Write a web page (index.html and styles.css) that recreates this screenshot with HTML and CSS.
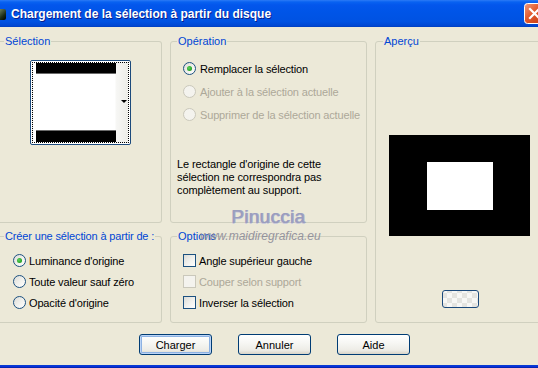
FILE: index.html
```html
<!DOCTYPE html>
<html lang="fr">
<head>
<meta charset="utf-8">
<title>Chargement de la sélection à partir du disque</title>
<link rel="stylesheet" href="styles.css">
</head>
<body>
<div class="window">
  <div class="titlebar">
    <span class="appicon"></span>
    <span class="title">Chargement de la sélection à partir du disque</span>
    <span class="close">
      <svg width="21" height="21" viewBox="0 0 21 21">
        <defs>
          <linearGradient id="cg" x1="0" y1="0" x2="1" y2="1">
            <stop offset="0" stop-color="#F19B7E"/>
            <stop offset="0.45" stop-color="#E2582C"/>
            <stop offset="1" stop-color="#C23A10"/>
          </linearGradient>
        </defs>
        <rect x="0.5" y="0.5" width="20" height="20" rx="3" fill="url(#cg)" stroke="#fff"/>
        <path d="M6 6 L15 15 M15 6 L6 15" stroke="#fff" stroke-width="2.2" stroke-linecap="square"/>
      </svg>
    </span>
  </div>
  <div class="content">
    <div class="groups">
      <fieldset class="group g-sel">
        <legend>Sélection</legend>
        <div class="thumb">
          <div class="thumb-focus">
            <div class="bar bar-top"></div>
            <div class="bar bar-bottom"></div>
            <span class="thumb-arrow"></span>
          </div>
        </div>
      </fieldset>
      <fieldset class="group g-op">
        <legend>Opération</legend>
        <div class="optlist op-list">
          <div class="opt"><span class="radio checked"></span>Remplacer la sélection</div>
          <div class="opt disabled"><span class="radio"></span>Ajouter à la sélection actuelle</div>
          <div class="opt disabled"><span class="radio"></span>Supprimer de la sélection actuelle</div>
        </div>
        <p class="note">Le rectangle d'origine de cette<br>sélection ne correspondra pas<br>complètement au support.</p>
      </fieldset>
      <fieldset class="group g-prev">
        <legend>Aperçu</legend>
        <div class="preview"><div class="preview-inner"></div></div>
        <div class="zoombtn"></div>
      </fieldset>
      <fieldset class="group g-create">
        <legend>Créer une sélection à partir de :</legend>
        <div class="optlist create-list">
          <div class="opt small"><span class="radio checked"></span>Luminance d'origine</div>
          <div class="opt small"><span class="radio"></span>Toute valeur sauf zéro</div>
          <div class="opt small"><span class="radio"></span>Opacité d'origine</div>
        </div>
      </fieldset>
      <fieldset class="group g-options">
        <legend>Options</legend>
        <div class="optlist options-list">
          <div class="opt small"><span class="check"></span>Angle supérieur gauche</div>
          <div class="opt small disabled"><span class="check"></span>Couper selon support</div>
          <div class="opt small"><span class="check"></span>Inverser la sélection</div>
        </div>
      </fieldset>
    </div>
    <div class="buttons">
      <button class="btn default">Charger</button>
      <button class="btn">Annuler</button>
      <button class="btn">Aide</button>
    </div>
  </div>
  <div class="bottomedge"></div>
  <span class="wm-name">Pinuccia</span>
  <span class="wm-url">www.maidiregrafica.eu</span>
</div>
</body>
</html>
```

FILE: styles.css
```css
html, body {
  margin: 0;
  padding: 0;
  overflow: hidden;
  background: #ECE9D8;
}

.window {
  position: relative;
  width: 560px;
  height: 368px;
  display: flex;
  flex-direction: column;
  background: #ECE9D8;
  font-family: "Liberation Sans", Arial, sans-serif;
  font-size: 11px;
  color: #000;
}

.titlebar {
  height: 27px;
  flex: none;
  display: flex;
  align-items: center;
  background: linear-gradient(to bottom, #2C7BF6 0, #0862F1 2px, #0356EC 5px, #0055E8 40%, #0052E2 80%, #0047D2 95%, #003EBE 100%);
  position: relative;
}

.appicon {
  width: 6px;
  height: 11px;
  margin-top: 1px;
  background: linear-gradient(135deg, #6C7D5A, #1A2A14 60%, #000);
  border-radius: 0 2px 2px 0;
}

.title {
  margin-left: 5px;
  color: #fff;
  font-family: "Liberation Sans", Arial, sans-serif;
  font-weight: bold;
  font-size: 12px;
  letter-spacing: 0;
  text-shadow: 1px 1px 0 #0A1E8C;
  white-space: nowrap;
}

.close {
  position: absolute;
  left: 524px;
  top: 3px;
  width: 21px;
  height: 21px;
  display: block;
}
.close svg { display: block; }

.content {
  flex: 1;
  padding-top: 8px;
}

.groups {
  display: grid;
  grid-template-columns: 162px 197px 168px;
  grid-template-rows: 188px 93px;
  column-gap: 8px;
  row-gap: 7px;
}

.group {
  margin: 0;
  padding: 0;
  border: 1px solid #D0D0BF;
  border-radius: 3px;
  min-width: 0;
}

.group legend {
  color: #0046D5;
  font-size: 11px;
  line-height: 13px;
  padding: 0 1px;
  margin-left: 6px;
}

.g-sel, .g-create {
  border-left: none;
  border-radius: 0 3px 3px 0;
}
.g-sel legend, .g-create legend { margin-left: 4px; }
.g-create legend { letter-spacing: -0.15px; }

.g-prev {
  grid-column: 3;
  grid-row: 1 / span 2;
}
.g-prev legend { margin-left: 7px; }

/* Selection thumbnail */
.thumb {
  margin: 12px 0 0 30px;
  width: 101px;
  height: 85px;
  box-sizing: border-box;
  border: 1px solid #1C4A7C;
  border-radius: 2px;
  background: #fff;
  padding: 1px;
}
.thumb-focus {
  position: relative;
  height: 100%;
  box-sizing: border-box;
  border: 1px dotted #000;
  display: flex;
  flex-direction: column;
  justify-content: space-between;
  padding-left: 3px;
  background: linear-gradient(to right, #fff 0, #fff 82px, #F7F7F5 83px, #EDEDE8 100%);
}
.bar {
  width: 80px;
  background: #000;
}
.bar-top {
  height: 11px;
  border-bottom: 1px solid #6A6A6A;
  box-sizing: border-box;
}
.bar-bottom {
  height: 12px;
  border-top: 1px solid #6A6A6A;
  box-sizing: border-box;
}
.thumb-arrow {
  position: absolute;
  right: 1px;
  top: 37px;
  width: 0;
  height: 0;
  border-left: 3px solid transparent;
  border-right: 3px solid transparent;
  border-top: 3px solid #000;
}

/* option lists */
.optlist {
  display: flex;
  flex-direction: column;
}
.opt {
  display: flex;
  align-items: center;
  height: 23px;
  gap: 4px;
  white-space: nowrap;
  letter-spacing: -0.15px;
}
.opt.small { height: 21px; }
.opt.disabled { color: #ACA899; }

.radio {
  width: 13px;
  height: 13px;
  box-sizing: border-box;
  border: 1px solid #1C5180;
  border-radius: 50%;
  background: linear-gradient(135deg, #DCDCD7 0%, #F0F0EC 50%, #FFFFFF 100%);
  display: flex;
  align-items: center;
  justify-content: center;
  flex: none;
}
.radio.checked::after {
  content: "";
  width: 5px;
  height: 5px;
  border-radius: 50%;
  background: radial-gradient(circle at 40% 40%, #5FD35F 0, #21A121 70%, #1A8A1A 100%);
}
.opt.disabled .radio {
  border-color: #CAC8BB;
  background: #F4F3EE;
}

.check {
  width: 13px;
  height: 13px;
  box-sizing: border-box;
  border: 1px solid #1C5180;
  background: linear-gradient(135deg, #DCDCD7 0%, #F0F0EC 50%, #FFFFFF 100%);
  flex: none;
}
.opt.disabled .check {
  border-color: #CAC8BB;
  background: #F4F3EE;
}

.op-list {
  margin-top: 9px;
  padding-left: 12px;
}
.note {
  margin: 32px 0 0 6px;
  line-height: 13px;
  font-size: 11px;
  letter-spacing: -0.1px;
}

.create-list {
  margin-top: 7px;
  padding-left: 13px;
}
.create-list .opt { gap: 3px; }

.options-list {
  margin-top: 7px;
  padding-left: 12px;
}
.options-list .opt { gap: 3px; }

/* preview */
.preview {
  margin: 87px 0 0 13px;
  width: 141px;
  height: 101px;
  background: #000;
  display: flex;
  align-items: center;
  justify-content: center;
}
.preview-inner {
  width: 66px;
  height: 48px;
  background: #fff;
}
.zoombtn {
  margin: 54px 0 0 66px;
  width: 37px;
  height: 18px;
  box-sizing: border-box;
  border: 1px solid #1C4A7C;
  border-radius: 3px;
  background-color: #F7F7F5;
  background-image:
    conic-gradient(#E4E4E0 25%, transparent 0 50%, #E4E4E0 0 75%, transparent 0);
  background-size: 10px 10px;
  background-position: 4px 2px;
}

/* buttons */
.buttons {
  display: flex;
  gap: 26px;
  padding-left: 139px;
  margin-top: 11px;
}
.btn {
  width: 73px;
  height: 21px;
  box-sizing: border-box;
  border: 1px solid #003C74;
  border-radius: 3px;
  background: linear-gradient(to bottom, #FFFFFF 0, #F7F7F4 40%, #EDECE6 80%, #D8D4C8 100%);
  font-family: "Liberation Sans", Arial, sans-serif;
  font-size: 11px;
  color: #000;
  padding: 0;
}
.btn.default {
  box-shadow: inset 0 0 0 1px #BCD4F6, inset 0 0 0 2px #8DB2E3;
}

.bottomedge {
  height: 3px;
  flex: none;
  background: linear-gradient(to bottom, #0841D0, #0831D9, #001EA0);
}

/* watermark overlay */
.wm-name {
  position: absolute;
  left: 231px;
  top: 207px;
  font-family: "Liberation Sans", Arial, sans-serif;
  font-size: 19px;
  line-height: 20px;
  color: #9A9DBE;
  letter-spacing: 0.3px;
  text-shadow: 1px 0 0 #A6A8C6, 0 1px 0 #C9CADB;
}
.wm-url {
  position: absolute;
  left: 200px;
  top: 230px;
  font-family: "Liberation Sans", Arial, sans-serif;
  font-size: 12px;
  line-height: 13px;
  font-style: italic;
  color: #8C8C98;
  opacity: 0.9;
}
```
